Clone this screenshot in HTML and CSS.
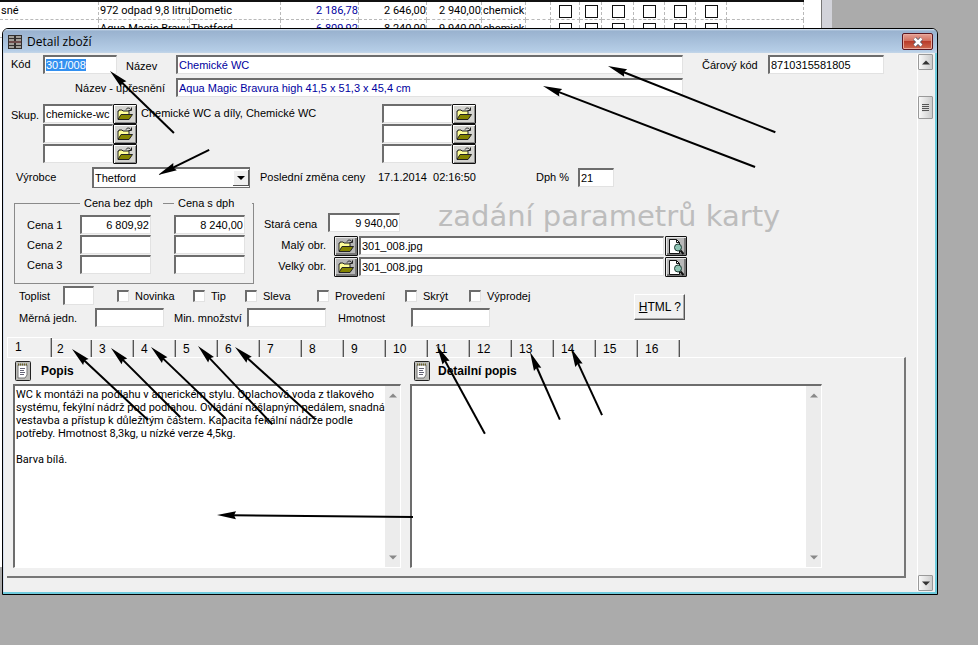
FILE: index.html
```html
<!DOCTYPE html>
<html lang="cs">
<head>
<meta charset="utf-8">
<title>Detail zboží</title>
<link rel="stylesheet" href="styles.css">
</head>
<body>
<svg class="defs" aria-hidden="true">
  <defs>
    <symbol id="folder" viewBox="0 0 18 14">
      <path d="M2 12V4h1V3h3l1 1h6v3" fill="#ffff99" stroke="#222" />
      <path d="M2 12.5 5 7.500h11.500L13 12.500z" fill="#848400" stroke="#222" />
      <path d="M10 2.500c1-2 4-2 5 0.500M15.500 0.500v3h-3" fill="none" stroke="#222" />
    </symbol>
    <symbol id="preview" viewBox="0 0 18 17">
      <path d="M2.500 1.500h7l3 3v11h-10z" fill="#fff" stroke="#111" />
      <path d="M9.500 1.500v3h3" fill="none" stroke="#111" />
      <circle cx="11" cy="9.500" r="3.500" fill="#8fc4b4" stroke="#1d3a33" />
      <path d="M13.500 12.500l3 3.500" stroke="#111" stroke-width="2" />
    </symbol>
    <symbol id="notes" viewBox="0 0 16 20">
      <rect x=".5" y=".5" width="15" height="19" rx="1" fill="#bcbcb8" stroke="#222" />
      <path d="M3 4h9v10l-2 3H3z" fill="#fff" stroke="#777" />
      <path d="M3 3.500h10" stroke="#6b6326" stroke-width="2" stroke-dasharray="1 1" />
      <path d="M5 7.500h5M5 9.500h4M5 11.500h5M5 13.500h4" stroke="#667" />
    </symbol>
    <path id="head" d="M0 0 19-4 17 0 19 4z" />
  </defs>
</svg>

<main class="backdrop">
  <div class="list">
    <table class="goods">
      <colgroup><col class="c-group"><col class="c-name"><col class="c-maker"><col class="c-buy"><col class="c-net"><col class="c-gross"><col class="c-cat"><col class="c-gap"><col class="c-f1"><col class="c-f2"><col class="c-f3"><col class="c-f4"><col class="c-f4"><col class="c-f4"><col class="c-rest"></colgroup>
      <tbody>
        <tr><td>sné</td><td>972 odpad 9,8 litru</td><td>Dometic</td><td class="num blue">2 186,78</td><td class="num">2 646,00</td><td class="num">2 940,00</td><td>chemick</td><td></td><td><i></i></td><td><i></i></td><td><i></i></td><td><i></i></td><td><i></i></td><td><i></i></td><td></td></tr>
        <tr><td></td><td>Aqua Magic Bravu</td><td>Thetford</td><td class="num blue">6 809,92</td><td class="num">8 240,00</td><td class="num">9 940,00</td><td>chemick</td><td></td><td><i></i></td><td><i></i></td><td><i></i></td><td><i></i></td><td><i></i></td><td><i></i></td><td></td></tr>
      </tbody>
    </table>
  </div>

  <section class="dialog" aria-labelledby="dlg-title">
    <header class="titlebar">
      <svg class="app-icon" viewBox="0 0 14 14" aria-hidden="true"><rect width="14" height="14" fill="#33302f"/><path d="M1 2h5M8 2h5M1 5h5M8 5h5M1 9h5M8 9h5M1 12h5M8 12h5" stroke="#c8c4bd" stroke-width="1.500"/><path d="M1 7h12" stroke="#a66"/></svg>
      <h1 id="dlg-title">Detail zboží</h1>
      <button class="close" type="button" aria-label="Zavřít"><svg viewBox="0 0 12 10" aria-hidden="true"><path d="M2.500 1.500l7 7M9.500 1.500l-7 7" stroke="#555a6a" stroke-width="4"/><path d="M2.500 1.500l7 7M9.500 1.500l-7 7" stroke="#fff" stroke-width="2.500"/></svg></button>
    </header>

    <div class="client">
      <form class="form">
        <div class="ident">
          <label class="pad" for="kod">Kód</label><input id="kod" value="301/008">
          <label class="name" for="nazev">Název</label><input class="blue" id="nazev" value="Chemické WC">
          <label class="barcode" for="ean">Čárový kód</label><input id="ean" value="8710315581805">
          <label class="subname" for="nazev2">Název - upřesnění</label><input class="blue" id="nazev2" value="Aqua Magic Bravura high 41,5 x 51,3 x 45,4 cm">
        </div>

        <div class="groups">
          <label class="pad" for="g1">Skup.</label><input id="g1" value="chemicke-wc"><button type="button" class="tool" aria-label="Vybrat"><svg><use href="#folder"/></svg></button><span class="path">Chemické WC a díly, Chemické WC</span><input aria-label="Skupina 4"><button type="button" class="tool" aria-label="Vybrat"><svg><use href="#folder"/></svg></button>
          <span></span><input aria-label="Skupina 2"><button type="button" class="tool" aria-label="Vybrat"><svg><use href="#folder"/></svg></button><span></span><input aria-label="Skupina 5"><button type="button" class="tool" aria-label="Vybrat"><svg><use href="#folder"/></svg></button>
          <span></span><input aria-label="Skupina 3"><button type="button" class="tool" aria-label="Vybrat"><svg><use href="#folder"/></svg></button><span></span><input aria-label="Skupina 6"><button type="button" class="tool" aria-label="Vybrat"><svg><use href="#folder"/></svg></button>
        </div>

        <div class="maker">
          <label class="indent" for="vyrobce">Výrobce</label>
          <span class="combo"><select id="vyrobce"><option>Thetford</option></select><svg class="drop" viewBox="0 0 16 16" aria-hidden="true"><path d="M4 6h8l-4 4z"/></svg></span>
          <span class="changed">Poslední změna ceny</span><span>17.1.2014&nbsp; 02:16:50</span>
          <label for="dph">Dph %</label><input id="dph" value="21">
        </div>

        <div class="middle">
          <div class="prices">
            <span class="cap cap-net">Cena bez dph</span><span class="cap cap-gross">Cena s dph</span>
            <span class="plabel">Cena 1</span><input class="num" aria-label="Cena 1 bez dph" value="6 809,92"><input class="num" aria-label="Cena 1 s dph" value="8 240,00">
            <span class="plabel">Cena 2</span><input class="num" aria-label="Cena 2 bez dph"><input class="num" aria-label="Cena 2 s dph">
            <span class="plabel">Cena 3</span><input class="num" aria-label="Cena 3 bez dph"><input class="num" aria-label="Cena 3 s dph">
          </div>
          <div class="side">
            <div class="old"><label for="stara">Stará cena</label><input class="num" id="stara" value="9 940,00"><p class="note">zadání parametrů karty</p></div>
            <div class="images">
              <label for="maly">Malý obr.</label><button type="button" class="tool dark" aria-label="Vybrat malý obrázek"><svg><use href="#folder"/></svg></button><input id="maly" value="301_008.jpg"><button type="button" class="tool dark view" aria-label="Náhled"><svg><use href="#preview"/></svg></button>
              <label for="velky">Velký obr.</label><button type="button" class="tool dark" aria-label="Vybrat velký obrázek"><svg><use href="#folder"/></svg></button><input id="velky" value="301_008.jpg"><button type="button" class="tool dark view" aria-label="Náhled"><svg><use href="#preview"/></svg></button>
            </div>
          </div>
        </div>

        <div class="options">
          <div>
            <div class="flags">
              <label for="toplist">Toplist</label><input class="field" id="toplist">
              <label><input type="checkbox">Novinka</label>
              <label><input type="checkbox">Tip</label>
              <label><input type="checkbox">Sleva</label>
              <label><input type="checkbox">Provedení</label>
              <label><input type="checkbox">Skrýt</label>
              <label><input type="checkbox">Výprodej</label>
            </div>
            <div class="amounts">
              <label for="mj">Měrná jedn.</label><input id="mj">
              <label class="min" for="min">Min. množství</label><input id="min">
              <label class="weight" for="hm">Hmotnost</label><input id="hm">
            </div>
          </div>
          <button type="button" class="html"><span><u>H</u>TML ?</span></button>
        </div>

        <nav class="tabs" aria-label="Stránky karty">
          <button type="button" class="on">1</button><button type="button">2</button><button type="button">3</button><button type="button">4</button><button type="button">5</button><button type="button">6</button><button type="button">7</button><button type="button">8</button><button type="button">9</button><button type="button">10</button><button type="button">11</button><button type="button">12</button><button type="button">13</button><button type="button">14</button><button type="button">15</button><button type="button">16</button>
        </nav>

        <div class="page">
          <div class="memo">
            <div class="memo-head"><svg aria-hidden="true"><use href="#notes"/></svg><label for="popis">Popis</label></div>
            <div class="memo-box"><textarea id="popis">WC k montáži na podlahu v americkém stylu. Oplachová voda z tlakového
systému, fekýlní nádrž pod podlahou. Ovládání nášlapným pedálem, snadná
vestavba a přístup k důležitým částem. Kapacita fekální nádrže podle
potřeby. Hmotnost 8,3kg, u nízké verze 4,5kg.

Barva bílá.</textarea><div class="bar"><svg viewBox="0 0 8 5"><path d="M0 4.500 4 .5l4 4z"/></svg><svg viewBox="0 0 8 5"><path d="M0 .5h8l-4 4z"/></svg></div></div>
          </div>
          <div class="memo">
            <div class="memo-head"><svg aria-hidden="true"><use href="#notes"/></svg><label for="detail">Detailní popis</label></div>
            <div class="memo-box"><textarea id="detail"></textarea><div class="bar"><svg viewBox="0 0 8 5"><path d="M0 4.500 4 .5l4 4z"/></svg><svg viewBox="0 0 8 5"><path d="M0 .5h8l-4 4z"/></svg></div></div>
          </div>
        </div>
      </form>

      <div class="scroll">
        <button type="button" aria-label="Nahoru"><svg viewBox="0 0 8 5"><path d="M0 4.500 4 .5l4 4z"/></svg></button>
        <div class="thumb"></div>
        <button type="button" class="down" aria-label="Dolů"><svg viewBox="0 0 8 5"><path d="M0 .5h8l-4 4z"/></svg></button>
      </div>
    </div>
  </section>

  <svg class="arrows" width="978" height="645" aria-hidden="true">
    <g transform="translate(110 71) rotate(44.1)"><use href="#head"/><path d="M15 0H89"/></g>
    <g transform="translate(158 175) rotate(-26.1)"><use href="#head"/><path d="M15 0H57"/></g>
    <g transform="translate(608 66) rotate(21.6)"><use href="#head"/><path d="M15 0H180"/></g>
    <g transform="translate(543 86) rotate(20.9)"><use href="#head"/><path d="M15 0H227"/></g>
    <g transform="translate(72 349) rotate(43.1)"><use href="#head"/><path d="M15 0H104"/></g>
    <g transform="translate(111 348) rotate(45)"><use href="#head"/><path d="M15 0H98"/></g>
    <g transform="translate(151 347) rotate(43.8)"><use href="#head"/><path d="M15 0H103"/></g>
    <g transform="translate(198 346) rotate(46.5)"><use href="#head"/><path d="M15 0H108"/></g>
    <g transform="translate(235 347) rotate(42)"><use href="#head"/><path d="M15 0H108"/></g>
    <g transform="translate(437 346) rotate(61.4)"><use href="#head"/><path d="M15 0H100"/></g>
    <g transform="translate(530 352) rotate(66.2)"><use href="#head"/><path d="M15 0H74"/></g>
    <g transform="translate(571 348) rotate(65.2)"><use href="#head"/><path d="M15 0H74"/></g>
    <g transform="translate(217 515) rotate(.6)"><use href="#head"/><path d="M15 0H196"/></g>
  </svg>
</main>
<script src="script.js"></script>
</body>
</html>
```
FILE: styles.css
```css
* { box-sizing: border-box; }

:root {
  --face: #f0f0f0;
  --dark: #6d6d6d;
  --soft: #e2e2e2;
  --blue: #0000a0;
}

body {
  margin: 0;
  background: #ababab;
  color: #000;
  font: 11px/18px "Liberation Sans", Arial, sans-serif;
}

button, input, select, textarea { margin: 0; font: inherit; color: inherit; border-radius: 0; }
h1, p { margin: 0; font: inherit; }
svg { display: block; }
.defs { position: absolute; width: 0; height: 0; }
.backdrop { position: relative; min-height: 100vh; overflow: hidden; }

/* goods list behind the dialog */
.list {
  width: 832px;
  height: 567px;
  background: #fff;
  border-right: 10px solid #d2d3da;
  box-shadow: inset -1px 0 #777;
  overflow: hidden;
}
.goods {
  width: 804px;
  table-layout: fixed;
  border-collapse: separate;
  border-spacing: 0;
  border-top: 2px solid #111;
  font-family: Roboto, "Liberation Sans", sans-serif;
}
.goods td {
  height: 17px;
  padding: 0 0 0 1px;
  line-height: 17px;
  border-right: 1px dashed #b9b9b9;
  border-bottom: 1px dashed #b9b9b9;
  white-space: nowrap;
}
.goods i { display: block; width: 13px; height: 13px; margin: 2px auto 0; border: 1px solid #111; }
.c-group { width: 99px; } .c-name { width: 91px; } .c-maker { width: 91px; }
.c-buy { width: 78px; } .c-net { width: 68px; } .c-gross { width: 55px; }
.c-cat { width: 44px; } .c-gap { width: 25px; } .c-f1 { width: 29px; }
.c-f2 { width: 22px; } .c-f3 { width: 32px; } .c-f4 { width: 31px; }
.num { text-align: right; }
.blue, .goods .blue { color: var(--blue); }

/* dialog window */
.dialog {
  position: absolute;
  top: 28px;
  left: 2px;
  right: 40px;
  background: var(--face);
  border: 1px solid #000;
  border-radius: 6px 6px 0 0;
  box-shadow: inset -2px -2px #6fcbdd, inset 1px 0 #d5dff0;
}
.titlebar {
  display: flex;
  align-items: center;
  gap: 5px;
  height: 24px;
  padding: 1px 4px 0 5px;
  border-radius: 5px 5px 0 0;
  background: linear-gradient(#dbe8f5 0, #99b2cf 2px, #b5cde6 90%, #c4d6e8);
}
.titlebar h1 { flex: 1; font: 12px/20px "Open Sans", "Noto Sans", sans-serif; }
.app-icon { width: 14px; height: 14px; }
.close {
  display: grid;
  place-items: center;
  width: 31px;
  height: 17px;
  padding: 0;
  border: 1px solid #5b1620;
  border-radius: 2px;
  background: linear-gradient(#e5a196, #d2705f 45%, #b93c2a 50%, #cf6a50);
  box-shadow: inset 0 0 0 1px #e9a99c;
}
.close svg { width: 12px; height: 10px; }
.client { display: flex; padding: 1px 3px 3px; }
.form { flex: 1; min-width: 0; padding-top: 1px; border-right: 1px solid #fff; }

input, textarea { min-width: 0; }
input:not([type="checkbox"]) {
  width: 100%;
  height: 19px;
  padding: 0 1px;
  background: #fff;
  border: solid;
  border-width: 2px 1px 1px 2px;
  border-color: var(--dark) var(--soft) var(--soft) var(--dark);
  outline: 0;
}
input::selection { background: #3390f0; color: #fff; }

.ident {
  display: grid;
  grid-template-columns: 37px 74px 59px minmax(0, 507px) 85px 116px;
  row-gap: 3px;
}
.pad { padding-left: 5px; }
.name { padding: 2px 0 0 9px; }
.barcode { padding: 1px 0 0 19px; }
.subname { grid-column: 1 / 4; padding: 1px 11px 0 0; text-align: right; }

.groups {
  display: grid;
  grid-template-columns: 37px 70px 25px 244px 70px 24px;
  grid-auto-rows: 20px;
  margin-top: 7px;
}
.groups label { padding-top: 2px; }
.groups .path { padding-left: 3px; }
.tool {
  display: grid;
  place-items: center;
  width: 24px;
  height: 20px;
  padding: 0;
  background: #d4d4d0;
  border: 1px solid #111;
  border-radius: 1px;
  box-shadow: inset 1px 1px #fff, inset -1px -1px #8a8a8a;
}
.tool svg { width: 18px; height: 14px; }
.tool.dark { background: #b8b8b8; box-shadow: inset 1px 1px #e8e8e8, inset -2px -2px #777; }
.tool.view { width: 22px; }
.tool.view svg { width: 18px; height: 17px; }

.maker {
  display: grid;
  grid-template-columns: 86px 158px 128px 158px 42px 36px;
  align-items: center;
  height: 20px;
  margin-top: 3px;
}
.indent { padding-left: 10px; }
.changed { padding-left: 10px; }
.combo { display: grid; height: 20px; }
.combo > * { grid-area: 1 / 1; }
.combo select {
  appearance: none;
  padding: 0 1px;
  background: #fff;
  border: solid;
  border-width: 2px 1px 1px 2px;
  border-color: var(--dark);
}
.drop {
  place-self: center end;
  width: 16px;
  height: 16px;
  margin-right: 1px;
  background: var(--face);
  box-shadow: inset -1px -1px #555, inset 1px 1px #fff;
  pointer-events: none;
}

.middle { display: flex; gap: 10px; margin: 10px 0 0 8px; }
.prices {
  display: grid;
  grid-template-columns: 65px 94px 70px;
  grid-template-rows: 11px repeat(3, 20px);
  width: 240px;
  margin-top: 6px;
  padding-bottom: 8px;
  border: 1px solid #8a8a8a;
}
.prices .num { width: 71px; }
.cap { justify-self: start; height: 18px; margin-top: -10px; padding: 0 10px 0 4px; background: var(--face); white-space: nowrap; }
.cap-net { grid-column: 2; }
.cap-gross { grid-column: 3; padding-right: 18px; }
.plabel { padding: 1px 0 0 12px; }
.side { flex: 1; min-width: 0; }
.old { display: flex; align-items: center; height: 39px; }
.old label { width: 64px; padding-top: 14px; }
.old input.num { width: 72px; margin-top: 12px; }
.note { margin-left: 38px; color: #bdbdbd; font: 29px/39px "DejaVu Sans", Verdana, sans-serif; white-space: nowrap; }
.images {
  display: grid;
  grid-template-columns: 62px 31px minmax(0, 305px) 22px;
  grid-auto-rows: 20px;
  gap: 1px;
}
.images label { text-align: right; }
.images label + .tool { justify-self: end; }

.options { display: flex; align-items: center; gap: 104px; margin: 2px 0 0 13px; }
.flags, .amounts { display: flex; align-items: center; }
.flags label { display: flex; align-items: center; }
.flags > label:first-child { width: 44px; }
.flags .field { width: 31px; margin-right: 23px; }
.flags label:nth-of-type(2) { width: 76px; }
.flags label:nth-of-type(3) { width: 52px; }
.flags label:nth-of-type(4) { width: 72px; }
.flags label:nth-of-type(5) { width: 88px; }
.flags label:nth-of-type(6) { width: 64px; }
input[type="checkbox"] {
  appearance: none;
  flex: none;
  width: 12px;
  height: 12px;
  margin-right: 6px;
  background: #fff;
  border: solid;
  border-width: 2px 1px 1px 2px;
  border-color: var(--dark) var(--soft) var(--soft) var(--dark);
}
.amounts { margin-top: 3px; }
.amounts label { width: 76px; }
.amounts input { flex: none; }
.amounts input:not([type="checkbox"]) { width: 79px; }
.amounts #mj:not([type="checkbox"]) { width: 69px; }
.amounts .min { width: 83px; padding-left: 10px; }
.amounts .weight { width: 85px; padding-left: 12px; }
.html {
  width: 51px;
  height: 26px;
  padding: 0;
  background: var(--face);
  border: 1px solid #fff;
  border-right-color: #555;
  border-bottom-color: #555;
  box-shadow: inset -1px -1px #aaa;
  font-size: 12px;
}

.tabs { display: flex; align-items: flex-end; height: 20px; margin: 10px 0 0 1px; }
.tabs button {
  width: 42px;
  height: 18px;
  padding: 0 0 0 7px;
  text-align: left;
  background: var(--face);
  border: 0;
  border-top: 1px solid #fff;
  box-shadow: inset -1px 0 #555, inset -2px 0 #b4b4b4;
  font-size: 12px;
}
.tabs .on { width: 45px; height: 20px; padding-bottom: 3px; border-left: 1px solid #fff; }
.tabs .on + button { width: 40px; padding-left: 5px; }
.page {
  display: flex;
  gap: 9px;
  margin: 0 11px 13px 1px;
  padding: 3px 82px 8px 6px;
  border: solid;
  border-width: 1px 2px 2px 0;
  border-color: #fff #777 #777;
}
.memo { flex: 388 1 0; min-width: 0; }
.memo + .memo { flex-grow: 412; }
.memo-head { display: flex; align-items: center; gap: 10px; height: 20px; font-size: 12px; font-weight: bold; }
.memo + .memo .memo-head { padding-left: 4px; gap: 8px; }
.memo-head svg { width: 16px; height: 20px; margin-left: 2px; }
.memo + .memo .memo-head svg { margin-left: 0; }
.memo-box {
  display: flex;
  height: 184px;
  margin-top: 3px;
  border: solid;
  border-width: 2px 1px 1px 2px;
  border-color: var(--dark) #fff #fff var(--dark);
}
.memo-box textarea {
  flex: 1;
  padding: 2px 1px;
  border: 0;
  outline: 0;
  resize: none;
  overflow: hidden;
  background: #fff;
  font-family: Roboto, "Liberation Sans", sans-serif;
  line-height: 13px;
  white-space: pre;
}
.bar {
  display: flex;
  flex-direction: column;
  justify-content: space-between;
  align-items: center;
  width: 15px;
  padding: 7px 0;
  background: #ececec;
}
.bar svg, .scroll svg { width: 8px; height: 5px; fill: #888; }
.scroll { display: flex; flex-direction: column; width: 16px; background: #eee; }
.scroll button, .thumb {
  display: grid;
  place-items: center;
  width: 15px;
  height: 16px;
  padding: 0;
  background: linear-gradient(90deg, #f8f8f8, #ccc);
  border: 1px solid #999;
  border-radius: 1px;
}
.scroll svg { fill: #333; }
.thumb { height: 23px; margin-top: 26px; }
.thumb::before { content: ""; width: 7px; height: 8px; background: repeating-linear-gradient(#555 0 1px, #ddd 1px 2px); }
.scroll .down { margin-top: auto; }

.arrows { position: absolute; top: 0; left: 0; pointer-events: none; }
.arrows path { stroke: #000; stroke-width: 2; }
#head { stroke: none; }
```
FILE: script.js
```js
const code = document.getElementById("kod");
code.focus();
code.select();
```
